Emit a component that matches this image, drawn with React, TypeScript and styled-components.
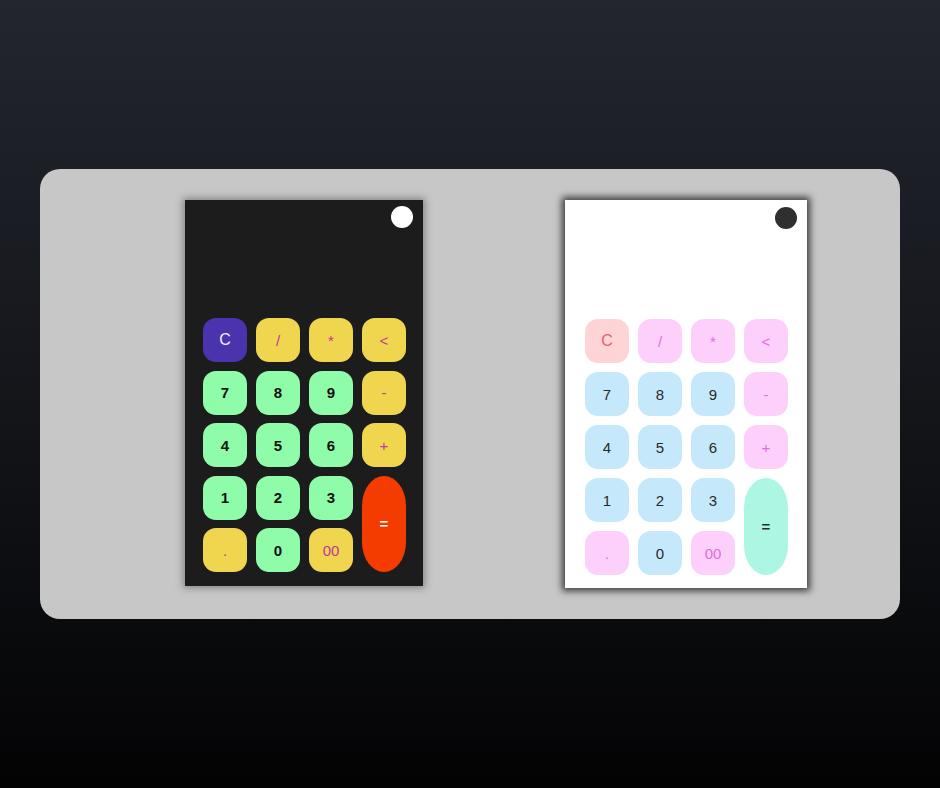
import React from "react";
import styled, { createGlobalStyle, css } from "styled-components";

const Global = createGlobalStyle`
  html, body { margin: 0; padding: 0; }
  body {
    min-height: 100vh;
    background: linear-gradient(180deg, #23262f 0%, #121418 55%, #030304 100%);
    font-family: "Liberation Sans", Arial, sans-serif;
  }
`;

type Mode = "dark" | "light";
type Kind = "clear" | "op" | "num" | "eq";

const Page = styled.div`
  min-height: 100vh;
  display: flex;
  align-items: center;
  justify-content: center;
`;

const Card = styled.div`
  width: 860px;
  height: 450px;
  box-sizing: border-box;
  background: #c6c7c6;
  border-radius: 20px;
  display: flex;
  align-items: flex-start;
  padding: 31px 0 0 145px;
  gap: 142px;
`;

const Calc = styled.div<{ $mode: Mode }>`
  box-sizing: border-box;
  display: flex;
  flex-direction: column;
  ${(p) =>
    p.$mode === "dark"
      ? css`
          width: 238px;
          height: 386px;
          background: #1c1c1c;
          box-shadow: 0 0 7px 2px rgba(70, 70, 70, 0.5);
          padding: 6px 10px 14px 18px;
        `
      : css`
          width: 242px;
          height: 388px;
          background: #ffffff;
          box-shadow: 0 0 7px 3px rgba(0, 0, 0, 0.7);
          padding: 7px 10px 13px 20px;
        `}
`;

const TopBar = styled.div`
  display: flex;
  justify-content: flex-end;
`;

const Toggle = styled.div<{ $mode: Mode }>`
  width: 22px;
  height: 22px;
  border-radius: 50%;
  background: ${(p) => (p.$mode === "dark" ? "#ffffff" : "#2f2f2f")};
`;

const Display = styled.div`
  flex: 1;
`;

const Keypad = styled.div<{ $mode: Mode }>`
  display: grid;
  grid-template-columns: repeat(4, 44px);
  grid-auto-rows: 44px;
  column-gap: 9px;
  row-gap: ${(p) => (p.$mode === "dark" ? "8.5px" : "9px")};
`;

const palette: Record<Mode, Record<Kind, { bg: string; fg: string; weight: number }>> = {
  dark: {
    clear: { bg: "#4b33ae", fg: "#f2f0ff", weight: 400 },
    op: { bg: "#f0d64f", fg: "#c2359a", weight: 400 },
    num: { bg: "#8efca9", fg: "#111111", weight: 700 },
    eq: { bg: "#f43c00", fg: "#ffffff", weight: 700 },
  },
  light: {
    clear: { bg: "#ffd4d7", fg: "#ee5d68", weight: 400 },
    op: { bg: "#fdd0fc", fg: "#e26ce0", weight: 400 },
    num: { bg: "#c6e8fb", fg: "#2a2a2a", weight: 400 },
    eq: { bg: "#adf6e4", fg: "#2a2a2a", weight: 700 },
  },
};

const Key = styled.button<{ $mode: Mode; $kind: Kind }>`
  border: none;
  padding: 0;
  margin: 0;
  display: flex;
  align-items: center;
  justify-content: center;
  font-family: "Liberation Sans", Arial, sans-serif;
  font-size: ${(p) => (p.$kind === "clear" ? "16px" : "15px")};
  cursor: pointer;
  background: ${(p) => palette[p.$mode][p.$kind].bg};
  color: ${(p) => palette[p.$mode][p.$kind].fg};
  font-weight: ${(p) => palette[p.$mode][p.$kind].weight};
  border-radius: 13px;
  ${(p) =>
    p.$kind === "eq" &&
    css`
      grid-column: 4;
      grid-row: 4 / span 2;
      border-radius: 22px / 30px;
    `}
`;

const keys: { label: string; kind: Kind }[] = [
  { label: "C", kind: "clear" },
  { label: "/", kind: "op" },
  { label: "*", kind: "op" },
  { label: "<", kind: "op" },
  { label: "7", kind: "num" },
  { label: "8", kind: "num" },
  { label: "9", kind: "num" },
  { label: "-", kind: "op" },
  { label: "4", kind: "num" },
  { label: "5", kind: "num" },
  { label: "6", kind: "num" },
  { label: "+", kind: "op" },
  { label: "1", kind: "num" },
  { label: "2", kind: "num" },
  { label: "3", kind: "num" },
  { label: "=", kind: "eq" },
  { label: ".", kind: "op" },
  { label: "0", kind: "num" },
  { label: "00", kind: "op" },
];

function Calculator({ mode }: { mode: Mode }) {
  return (
    <Calc $mode={mode}>
      <TopBar>
        <Toggle $mode={mode} />
      </TopBar>
      <Display />
      <Keypad $mode={mode}>
        {keys.map((k) => (
          <Key key={k.label} $mode={mode} $kind={k.kind}>
            {k.label}
          </Key>
        ))}
      </Keypad>
    </Calc>
  );
}

export default function App() {
  return (
    <>
      <Global />
      <Page>
        <Card>
          <Calculator mode="dark" />
          <Calculator mode="light" />
        </Card>
      </Page>
    </>
  );
}
